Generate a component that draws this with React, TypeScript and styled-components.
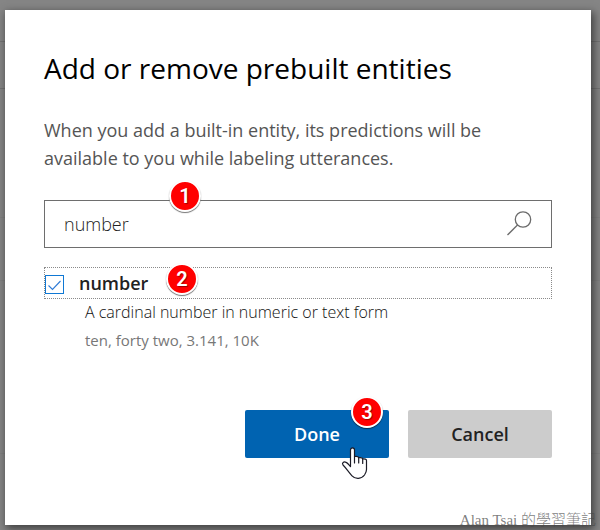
import React, { useState } from "react";
import styled, { createGlobalStyle } from "styled-components";

const GlobalStyle = createGlobalStyle`
  * { box-sizing: border-box; }
  body { margin: 0; background: #858585; font-family: "Open Sans", "Noto Sans", sans-serif; }
`;

const Page = styled.div`
  position: relative;
  display: flex;
  flex-direction: column;
  min-height: 100vh;
  padding: 10px 9px 5px 5px;
  background: #858585;
  overflow: hidden;
`;

const Backdrop = styled.div`
  position: absolute;
  inset: 0;
  display: flex;
  flex-direction: column;
`;

const BackdropRow = styled.div<{ $height: number; $faint?: boolean }>`
  height: ${(p) => p.$height}px;
  border-bottom: 1px solid ${(p) => (p.$faint ? "#7f7f7f" : "#737373")};
`;

const Dialog = styled.main`
  position: relative;
  flex: 1;
  padding: 38px 39px;
  background: #fff;
  box-shadow: 2px 3px 8px 1px rgba(0, 0, 0, 0.5);
`;

const Title = styled.h1`
  margin: 0;
  font-size: 28px;
  line-height: 40px;
  font-weight: 400;
  color: #000;
`;

const Intro = styled.p`
  margin: 28px 0;
  font-size: 18px;
  line-height: 28px;
  font-weight: 400;
  color: #555;
`;

const SearchBox = styled.label`
  position: relative;
  display: flex;
  align-items: center;
  height: 48px;
  padding: 0 19px;
  border: 1px solid #6e6e6e;
`;

const SearchInput = styled.input`
  flex: 1;
  min-width: 0;
  padding: 0;
  border: 0;
  outline: 0;
  background: transparent;
  font: 300 18px/28px "Open Sans", "Noto Sans", sans-serif;
  color: #222;
`;

const Option = styled.label`
  position: relative;
  display: flex;
  align-items: center;
  gap: 15px;
  height: 32px;
  margin-top: 19px;
  border: 1px dotted #8a8a8a;
`;

const OptionName = styled.span`
  font-size: 18px;
  line-height: 28px;
  font-weight: 600;
  color: #222;
`;

const Tick = styled.span`
  display: grid;
  width: 19px;
  height: 19px;
  margin-top: 3px;
  > * { grid-area: 1 / 1; }
`;

const TickInput = styled.input`
  appearance: none;
  width: 19px;
  height: 19px;
  margin: 0;
  border: 1px solid #0f78d4;
  background: #fff;
  outline: 0;
`;

const TickMark = styled.svg`
  position: relative;
  width: 19px;
  height: 19px;
  pointer-events: none;
`;

const Details = styled.div`
  padding-left: 41px;
  line-height: 28px;
`;

const Description = styled.p`
  margin: -1px 0 0;
  font-size: 16px;
  font-weight: 300;
  color: #111;
`;

const Examples = styled.p`
  margin: 0;
  font-size: 15px;
  color: #777;
`;

const Actions = styled.div`
  display: flex;
  justify-content: flex-end;
  gap: 19px;
  margin-top: 56px;
`;

const Button = styled.button<{ $primary?: boolean }>`
  position: relative;
  width: 144px;
  height: 48px;
  padding: 0;
  border: 0;
  border-radius: 2px;
  background: ${(p) => (p.$primary ? "#0063b1" : "#ccc")};
  color: ${(p) => (p.$primary ? "#fff" : "#222")};
  font: 600 18px/28px "Open Sans", "Noto Sans", sans-serif;
`;

const Badge = styled.span<{ $left: number; $top: number }>`
  position: absolute;
  left: ${(p) => p.$left}px;
  top: ${(p) => p.$top}px;
  width: 32px;
  height: 32px;
  border: 2px solid #fff;
  border-radius: 50%;
  background: #f00;
  box-shadow: 0 1px 1px rgba(0, 0, 0, 0.55);
  color: #fff;
  font: 600 20px/28px Roboto, sans-serif;
  text-align: center;
  text-shadow: 1px 1px 1px rgba(0, 0, 0, 0.4);
`;

const Pointer = styled.svg`
  position: absolute;
  left: 96px;
  top: 36px;
  width: 28px;
  height: 36px;
`;

const Watermark = styled.small`
  position: absolute;
  right: 4px;
  bottom: 0;
  font: 300 15px/20px "Liberation Serif", "Noto Sans CJK TC", serif;
  color: rgba(70, 70, 70, 0.7);
`;

export default function App() {
  const [query, setQuery] = useState("number");
  const [checked, setChecked] = useState(true);
  return (
    <Page>
      <GlobalStyle />
      <Backdrop aria-hidden="true">
        <BackdropRow $height={42} />
        <BackdropRow $height={47} />
        <BackdropRow $height={129} $faint />
        <BackdropRow $height={63} $faint />
        <BackdropRow $height={173} $faint />
      </Backdrop>
      <Dialog role="dialog" aria-labelledby="dialog-title">
        <Title id="dialog-title">Add or remove prebuilt entities</Title>
        <Intro>
          When you add a built-in entity, its predictions will be available to you while labeling utterances.
        </Intro>
        <SearchBox>
          <SearchInput aria-label="Search entities" value={query} onChange={(e) => setQuery(e.target.value)} />
          <svg width="26" height="26" viewBox="0 0 26 26" fill="none" stroke="#6b6b6b" strokeWidth="1.3" aria-hidden="true">
            <circle cx="17" cy="8.5" r="7.7" />
            <path d="M11.5 14 1.5 24" />
          </svg>
          <Badge $left={124} $top={-21}>1</Badge>
        </SearchBox>
        <Option>
          <Tick>
            <TickInput type="checkbox" checked={checked} onChange={(e) => setChecked(e.target.checked)} />
            {checked && (
              <TickMark viewBox="0 0 19 19" fill="none" stroke="#2f7bd6" strokeWidth="1.1" aria-hidden="true">
                <path d="M3.5 10.5 7.5 14.5 15.5 6" />
              </TickMark>
            )}
          </Tick>
          <OptionName>number</OptionName>
          <Badge $left={121} $top={-5}>2</Badge>
        </Option>
        <Details>
          <Description>A cardinal number in numeric or text form</Description>
          <Examples>ten, forty two, 3.141, 10K</Examples>
        </Details>
        <Actions>
          <Button type="button" $primary>
            Done
            <Badge $left={106} $top={-14}>3</Badge>
            <Pointer viewBox="0 0 28 36" fill="#fff" stroke="#1b1b26" strokeWidth="1.2" strokeLinejoin="round" strokeLinecap="round" aria-hidden="true">
              <path d="M9.5 20.5V4c0-2.8 4-2.8 4 0v6.5c2.2-.3 4 .2 4.2 1.2 2-.3 3.8.2 4 1.2 2.2-.4 3.800.4 3.800 1.600V23.500c0 2.500-1 4-2 5.500-3 4-9 4.500-12.500.8C7.500 26 5 22 2 19c-1.500-2.200.8-3.800 3.200-2.600 1.500.7 2.800 2.500 4.300 4.100Z" />
              <path fill="none" d="M13.5 10.5V17M17.700 11.700V17M21.700 12.900V17.500" />
            </Pointer>
          </Button>
          <Button type="button">Cancel</Button>
        </Actions>
      </Dialog>
      <Watermark>Alan Tsai 的學習筆記</Watermark>
    </Page>
  );
}
